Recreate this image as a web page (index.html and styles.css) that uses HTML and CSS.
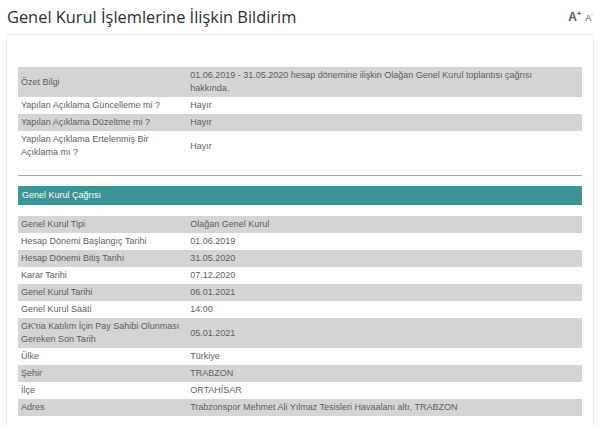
FILE: index.html
```html
<!DOCTYPE html>
<html lang="tr">
<head>
<meta charset="utf-8">
<link rel="stylesheet" href="styles.css">
</head>
<body>
<div class="page">
  <div class="head">
    <h1 class="title">Genel Kurul İşlemlerine İlişkin Bildirim</h1>
    <div class="fontsize"><span class="big">A<sup>+</sup></span><span class="small">A<sup>-</sup></span></div>
  </div>
  <div class="box">
    <table class="info">
      <tr class="g"><td class="k">Özet Bilgi</td><td>01.06.2019 - 31.05.2020 hesap dönemine ilişkin Olağan Genel Kurul toplantısı çağrısı hakkında.</td></tr>
      <tr><td class="k">Yapılan Açıklama Güncelleme mi ?</td><td>Hayır</td></tr>
      <tr class="g"><td class="k">Yapılan Açıklama Düzeltme mi ?</td><td>Hayır</td></tr>
      <tr><td class="k">Yapılan Açıklama Ertelenmiş Bir Açıklama mı ?</td><td>Hayır</td></tr>
    </table>
    <div class="rule"></div>
    <div class="section">Genel Kurul Çağrısı</div>
    <table class="info">
      <tr class="g"><td class="k">Genel Kurul Tipi</td><td>Olağan Genel Kurul</td></tr>
      <tr><td class="k">Hesap Dönemi Başlangıç Tarihi</td><td>01.06.2019</td></tr>
      <tr class="g"><td class="k">Hesap Dönemi Bitiş Tarihi</td><td>31.05.2020</td></tr>
      <tr><td class="k">Karar Tarihi</td><td>07.12.2020</td></tr>
      <tr class="g"><td class="k">Genel Kurul Tarihi</td><td>06.01.2021</td></tr>
      <tr><td class="k">Genel Kurul Saati</td><td>14:00</td></tr>
      <tr class="g"><td class="k">GK'na Katılım İçin Pay Sahibi Olunması Gereken Son Tarih</td><td>05.01.2021</td></tr>
      <tr><td class="k">Ülke</td><td>Türkiye</td></tr>
      <tr class="g"><td class="k">Şehir</td><td>TRABZON</td></tr>
      <tr><td class="k">İlçe</td><td>ORTAHİSAR</td></tr>
      <tr class="g"><td class="k">Adres</td><td>Trabzonspor Mehmet Ali Yılmaz Tesisleri Havaalanı altı, TRABZON</td></tr>
    </table>
  </div>
</div>
</body>
</html>
```
FILE: styles.css
```css
html, body {
  margin: 0;
  padding: 0;
  background: #fff;
}
.page {
  padding: 0 6px;
}
.head {
  display: flex;
  justify-content: space-between;
  align-items: flex-start;
  height: 34px;
}
.title {
  margin: 0;
  padding: 5px 0 0 1px;
  font-family: "Open Sans", sans-serif;
  font-weight: 500;
  font-size: 16.4px;
  line-height: 24px;
  color: #2e2e2e;
}
.fontsize {
  display: flex;
  align-items: baseline;
  gap: 4px;
  padding: 11px 1px 0 0;
  font-family: "Liberation Sans", Arial, sans-serif;
  color: #555;
  line-height: 12px;
}
.fontsize sup {
  font-size: 60%;
  vertical-align: 5px;
  line-height: 0;
}
.big {
  font-weight: 700;
  font-size: 12px;
}
.small {
  font-size: 9px;
}
.box {
  border: 1px solid #ececec;
  border-bottom: none;
  padding: 32px 11px 20px;
  height: 400px;
}
.info {
  width: 100%;
  border-collapse: collapse;
  font-family: "Liberation Sans", Arial, sans-serif;
  font-size: 9px;
  line-height: 13px;
  color: #5e5e5e;
}
.info td {
  padding: 2px 30px 2px 3px;
  vertical-align: middle;
}
.info td.k {
  width: 30%;
  padding-right: 3px;
}
.info tr.g td {
  background: #d4d4d4;
}
.rule {
  height: 1px;
  background: #a8a8a8;
  margin: 14px 0 10px;
}
.section {
  background: #3f9296;
  color: #fff;
  font-family: "Liberation Sans", Arial, sans-serif;
  font-size: 9px;
  line-height: 13px;
  padding: 3px 4px;
  margin-bottom: 11px;
}
```
